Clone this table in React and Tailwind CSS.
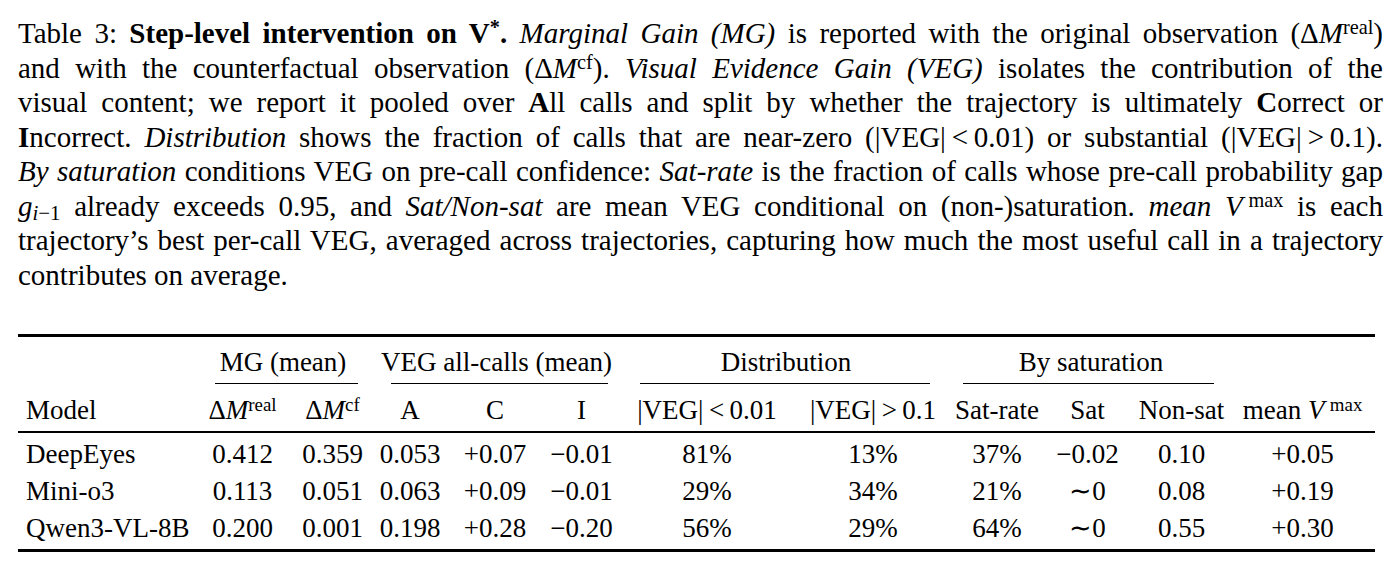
import React from "react";

const serif = { fontFamily: '"Liberation Serif", "Times New Roman", serif' };

function M({ children }) {
  return <span className="italic">{children}</span>;
}

function Sup({ children }) {
  return <span className="relative top-[-0.42em] text-[0.7em] leading-none">{children}</span>;
}

function Line({ children, last }) {
  return (
    <div className={last ? "whitespace-nowrap" : "text-justify [text-align-last:justify] whitespace-nowrap"}>
      {children}
    </div>
  );
}

const cols =
  "grid grid-cols-[175px_99px_81px_74px_96px_77px_174px_158px_90px_91px_97px_145px]";

const rows = [
  ["DeepEyes", "0.412", "0.359", "0.053", "+0.07", "−0.01", "81%", "13%", "37%", "−0.02", "0.10", "+0.05"],
  ["Mini-o3", "0.113", "0.051", "0.063", "+0.09", "−0.01", "29%", "34%", "21%", "∼0", "0.08", "+0.19"],
  ["Qwen3-VL-8B", "0.200", "0.001", "0.198", "+0.28", "−0.20", "56%", "29%", "64%", "∼0", "0.55", "+0.30"],
];

function Group({ span, label, ml, mr }) {
  return (
    <div className={`${span} flex flex-col`}>
      <div className="text-center leading-[34px]">{label}</div>
      <div className={`mt-[4px] h-px bg-black ${ml} ${mr}`} />
    </div>
  );
}

export default function App() {
  return (
    <div className="w-[1398px] h-[570px] bg-white text-black overflow-hidden" style={serif}>
      <div className="pl-[18px] pt-[16px] w-[1383px] text-[29px] leading-[34.5px]">
        <Line>
          Table 3: <b>Step-level intervention on V<Sup>*</Sup>.</b> <i>Marginal Gain (MG)</i> is reported with the original observation (Δ<M>M</M><Sup>real</Sup>)
        </Line>
        <Line>
          and with the counterfactual observation (Δ<M>M</M><Sup>cf</Sup>). <i>Visual Evidence Gain (VEG)</i> isolates the contribution of the
        </Line>
        <Line>
          visual content; we report it pooled over <b>A</b>ll calls and split by whether the trajectory is ultimately <b>C</b>orrect or
        </Line>
        <Line>
          <b>I</b>ncorrect. <i>Distribution</i> shows the fraction of calls that are near-zero (|VEG|&thinsp;&lt;&thinsp;0.01) or substantial (|VEG|&thinsp;&gt;&thinsp;0.1).
        </Line>
        <Line>
          <i>By saturation</i> conditions VEG on pre-call confidence: <i>Sat-rate</i> is the fraction of calls whose pre-call probability gap
        </Line>
        <Line>
          <M>g</M><span className="relative top-[0.22em] text-[0.72em] leading-none"><M>i</M>−1</span> already exceeds 0.95, and <i>Sat/Non-sat</i> are mean VEG conditional on (non-)saturation. <i>mean</i> <M>V</M>&thinsp;<Sup>max</Sup> is each
        </Line>
        <Line>
          trajectory’s best per-call VEG, averaged across trajectories, capturing how much the most useful call in a trajectory
        </Line>
        <Line last>contributes on average.</Line>
      </div>

      <div className="ml-[18px] mt-[42px] w-[1357px] text-[27px]">
        <div className="h-[3px] bg-black" />
        <div className={`${cols} pt-[8px]`}>
          <div />
          <Group span="col-span-2" label="MG (mean)" ml="ml-[22px]" mr="mr-[15px]" />
          <Group span="col-span-3" label="VEG all-calls (mean)" ml="ml-[18px]" mr="mr-[12px]" />
          <Group span="col-span-2" label="Distribution" ml="ml-[20px]" mr="mr-[22px]" />
          <Group span="col-span-3" label="By saturation" ml="ml-[11px]" mr="mr-[16px]" />
          <div />
        </div>
        <div className={`${cols} pt-[9px] leading-[34px] whitespace-nowrap`}>
          <div className="pl-[8px]">Model</div>
          <div className="text-center">Δ<M>M</M><Sup>real</Sup></div>
          <div className="text-center">Δ<M>M</M><Sup>cf</Sup></div>
          <div className="text-center">A</div>
          <div className="text-center">C</div>
          <div className="text-center">I</div>
          <div className="text-center">|VEG|&thinsp;&lt;&thinsp;0.01</div>
          <div className="text-center">|VEG|&thinsp;&gt;&thinsp;0.1</div>
          <div className="text-center">Sat-rate</div>
          <div className="text-center">Sat</div>
          <div className="text-center">Non-sat</div>
          <div className="text-center">mean <M>V</M>&thinsp;<Sup>max</Sup></div>
        </div>
        <div className="mt-[4px] h-[2px] bg-black" />
        <div className="pt-[3px] pb-[2px]">
          {rows.map((r) => (
            <div key={r[0]} className={`${cols} leading-[37px] whitespace-nowrap`}>
              {r.map((c, i) => (
                <div key={i} className={i === 0 ? "pl-[8px]" : "text-center"}>
                  {c}
                </div>
              ))}
            </div>
          ))}
        </div>
        <div className="h-[3px] bg-black" />
      </div>
    </div>
  );
}
